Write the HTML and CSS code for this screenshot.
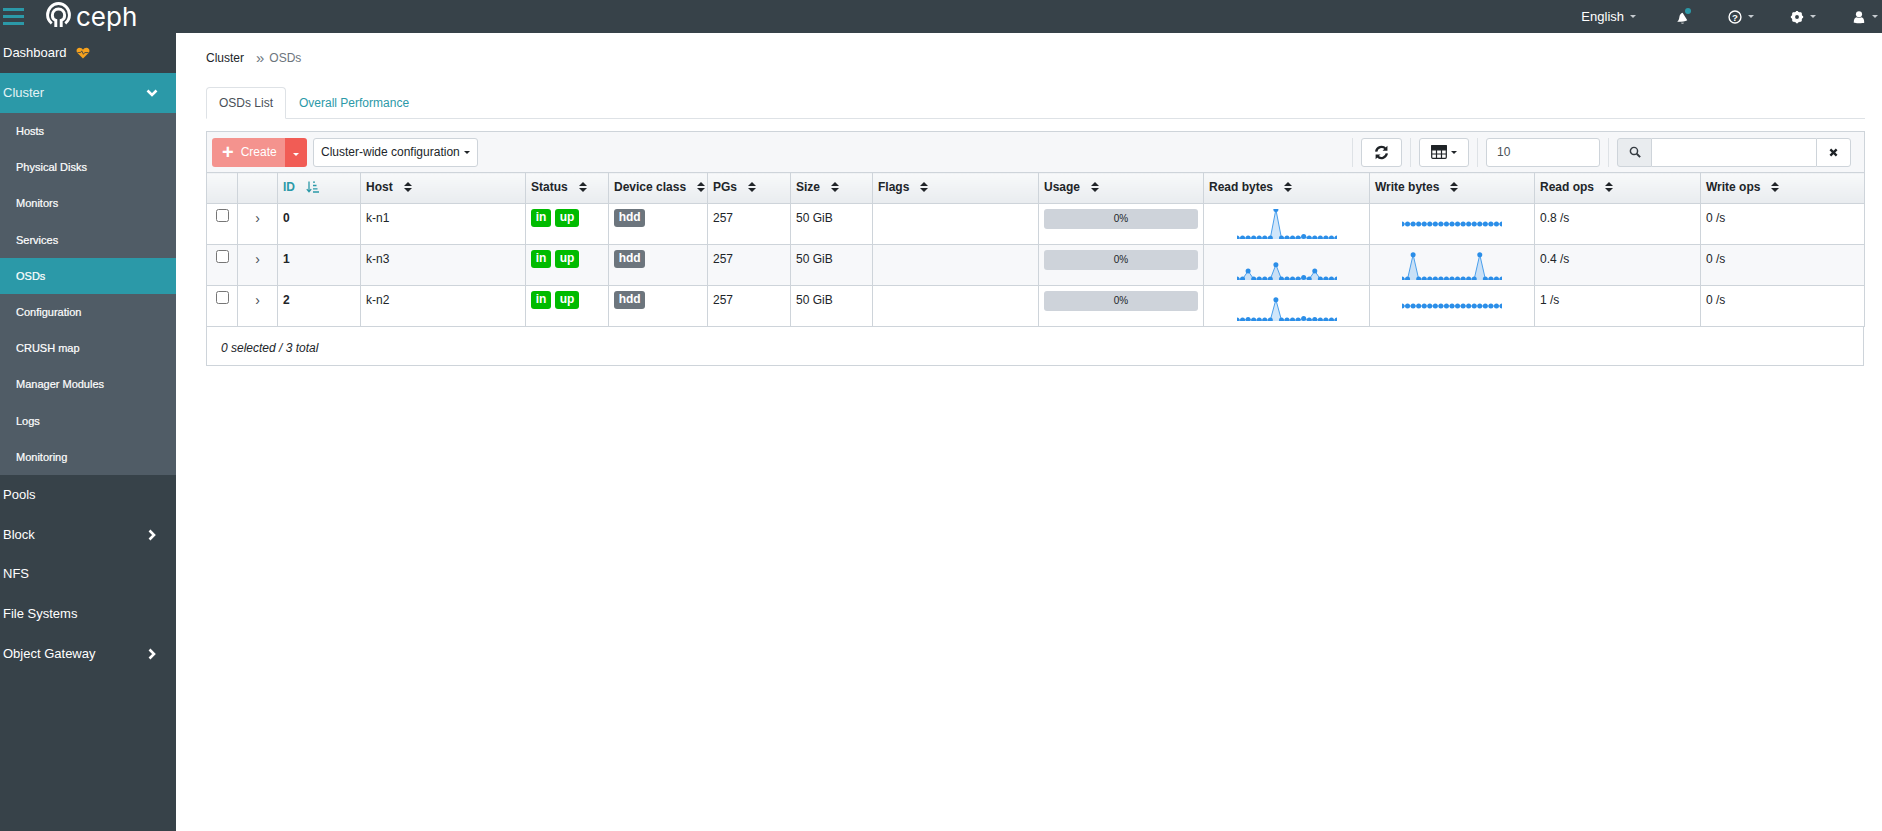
FILE: index.html
```html
<!DOCTYPE html>
<html lang="en">
<head>
    <meta charset="UTF-8">
    <meta name="viewport" content="width=device-width, initial-scale=1.0">
    <title>Ceph - OSDs</title>
    <link rel="stylesheet" href="styles.css">
</head>
<body>
    <header class="topbar">
        <div class="hamburger"><span></span><span></span><span></span></div>
        <div class="brand">
            <svg class="brand-mark" viewBox="0 0 24 24" fill="none" stroke="#fff" stroke-width="2.800">
                <path d="M5.500 20.500C3 18.500 1.500 15.500 1.500 12.500 1.500 6.500 6.100 1.500 12 1.500s10.500 5 10.500 11c0 3-1.500 6-4 8"/>
                <path d="M9.400 24v-6.400c-2-.7-3.300-2.600-3.300-5 0-3.300 2.600-5.900 5.900-5.900s5.900 2.600 5.900 5.900c0 2.400-1.300 4.300-3.300 5V24"/>
            </svg>
            <span class="brand-name">ceph</span>
        </div>
        <nav class="topnav">
            <a class="topnav-lang">English<i class="caret"></i></a>
            <a class="topnav-bell">
                <svg class="nav-icon" viewBox="0 0 16 16" fill="#fff"><path d="M2.500 13.500c1.800-1.600 2.300-3.400 2.500-5.500.3-2.700 1.700-4.700 3.700-5l5.300 8.800c-2.500 1.300-6.500 1.800-11.500 1.700zM6.800 14.500h3.400c-.4 1.300-2.700 1.300-3.400 0z"/></svg>
                <span class="bell-dot"></span>
            </a>
            <a class="topnav-icon">
                <svg class="nav-icon" viewBox="0 0 16 16"><circle cx="8" cy="8" r="6.800" fill="none" stroke="#fff" stroke-width="1.600"/><text x="8" y="12" text-anchor="middle" class="help-mark">?</text></svg>
                <i class="caret"></i>
            </a>
            <a class="topnav-icon">
                <svg class="nav-icon" viewBox="0 0 16 16"><circle cx="8" cy="8" r="4.600" fill="none" stroke="#fff" stroke-width="3.400"/><path d="M8 1v14M1 8h14M3 3l10 10M13 3L3 13" stroke="#fff" stroke-width="2.200"/><circle cx="8" cy="8" r="2.200" fill="#374249"/></svg>
                <i class="caret"></i>
            </a>
            <a class="topnav-icon topnav-user">
                <svg class="nav-icon" viewBox="0 0 16 16" fill="#fff"><circle cx="8" cy="4.800" r="3.500"/><path d="M2 14.500c0-4 1-6 3.500-6.300 1.500 1 3.500 1 5 0C13 8.500 14 10.500 14 14.500c-1 .7-11 .7-12 0z"/></svg>
                <i class="caret"></i>
            </a>
        </nav>
    </header>

    <div class="layout">
        <aside class="sidebar">
            <a class="side-item side-top">Dashboard
                <svg class="heart" viewBox="0 0 16 14"><path d="M8 13.500L1.500 7C-.5 4.800.5 1 4 1c1.800 0 3.200 1 4 2.200C8.800 2 10.200 1 12 1c3.500 0 4.500 3.800 2.500 6z" fill="#f6a21e"/><path d="M1.500 6.500h3.700l1.300-2 2 4 1.500-2h4.500" fill="none" stroke="#374249" stroke-width="1"/></svg>
            </a>
            <a class="side-item side-top side-open">Cluster
                <svg class="chevron" viewBox="0 0 12 12"><path d="M1.500 3.500L6 8l4.500-4.500" fill="none" stroke="#fff" stroke-width="2.600"/></svg>
            </a>
            <ul class="side-sub">
                <li>Hosts</li>
                <li>Physical Disks</li>
                <li>Monitors</li>
                <li>Services</li>
                <li class="active">OSDs</li>
                <li>Configuration</li>
                <li>CRUSH map</li>
                <li>Manager Modules</li>
                <li>Logs</li>
                <li>Monitoring</li>
            </ul>
            <a class="side-item">Pools</a>
            <a class="side-item">Block
                <svg class="chevron" viewBox="0 0 12 12"><path d="M3.500 1.500L8 6l-4.500 4.500" fill="none" stroke="#fff" stroke-width="2.600"/></svg>
            </a>
            <a class="side-item">NFS</a>
            <a class="side-item">File Systems</a>
            <a class="side-item">Object Gateway
                <svg class="chevron" viewBox="0 0 12 12"><path d="M3.500 1.500L8 6l-4.500 4.500" fill="none" stroke="#fff" stroke-width="2.600"/></svg>
            </a>
        </aside>

        <main class="content">
            <div class="breadcrumb"><span>Cluster</span><span class="crumb-sep">&raquo;</span><span class="crumb-current">OSDs</span></div>

            <ul class="tabs">
                <li class="tab active">OSDs List</li>
                <li class="tab">Overall Performance</li>
            </ul>

            <div class="toolbar">
                <div class="btn-group">
                    <button class="btn-create"><b class="plus">+</b>Create</button>
                    <button class="btn-create-toggle"><i class="caret"></i></button>
                </div>
                <button class="btn">Cluster-wide configuration<i class="caret dark"></i></button>
                <div class="toolbar-right">
                    <div class="tool-slot">
                        <button class="btn btn-icon">
                            <svg class="refresh-icon" viewBox="0 0 16 16" fill="none" stroke="#1f2327" stroke-width="2.500"><path d="M2.300 7a5.800 5.800 0 0 1 10-3"/><path d="M13.700 9a5.800 5.800 0 0 1-10 3"/><path d="M14.300 .8v5.200H9.100z" fill="#1f2327" stroke="none"/><path d="M1.700 15.200V10h5.200z" fill="#1f2327" stroke="none"/></svg>
                        </button>
                    </div>
                    <div class="tool-slot">
                        <button class="btn btn-columns">
                            <svg class="tool-icon" viewBox="0 0 16 14" fill="none" stroke="#1f2327" stroke-width="1.200"><rect x=".7" y=".7" width="14.600" height="12.600" rx="1"/><path d="M.7 4.800h14.600M.7 9h14.600M5.500 4.800v8.500M10.500 4.800v8.500"/><rect x=".7" y=".7" width="14.600" height="3.600" fill="#1f2327"/></svg>
                            <i class="caret dark"></i>
                        </button>
                    </div>
                    <div class="tool-slot">
                        <input class="page-size" type="text" value="10">
                    </div>
                    <div class="tool-slot search">
                        <span class="search-addon">
                            <svg class="search-icon" viewBox="0 0 14 14" fill="none" stroke="#343a40" stroke-width="1.700"><circle cx="5.800" cy="5.800" r="4.200"/><path d="M9 9l4 4" stroke-width="2.200"/></svg>
                        </span>
                        <input class="search-input" type="text">
                        <span class="search-clear">
                            <svg class="clear-icon" viewBox="0 0 10 10" stroke="#1f2327" stroke-width="2.600"><path d="M1.500 1.500l7 7M8.500 1.500l-7 7"/></svg>
                        </span>
                    </div>
                </div>
            </div>

            <table class="datatable">
                <colgroup>
                    <col class="w31"><col class="w40"><col class="w83"><col class="w165"><col class="w83"><col class="w99"><col class="w83"><col class="w82"><col class="w166"><col class="w165"><col class="w166"><col class="w165"><col class="w166"><col class="w164">
                </colgroup>
                <thead>
                    <tr>
                        <th></th>
                        <th></th>
                        <th class="sorted">ID
                            <svg class="sort-id" viewBox="0 0 13 12" fill="none" stroke="#2b99a8" stroke-width="1.300"><path d="M3 .5v10M.8 8.200L3 10.800l2.200-2.600"/><path d="M7 1.200h2M7 4.500h3.500M7 7.800h4.500M7 11h6"/></svg>
                        </th>
                        <th>Host<i class="sort"></i></th>
                        <th>Status<i class="sort"></i></th>
                        <th>Device class<i class="sort"></i></th>
                        <th>PGs<i class="sort"></i></th>
                        <th>Size<i class="sort"></i></th>
                        <th>Flags<i class="sort"></i></th>
                        <th>Usage<i class="sort"></i></th>
                        <th>Read bytes<i class="sort"></i></th>
                        <th>Write bytes<i class="sort"></i></th>
                        <th>Read ops<i class="sort"></i></th>
                        <th>Write ops<i class="sort"></i></th>
                    </tr>
                </thead>
                <tbody>
                    <tr>
                        <td class="cell-check"><input type="checkbox"></td>
                        <td class="cell-expand">&rsaquo;</td>
                        <td class="cell-id">0</td>
                        <td>k-n1</td>
                        <td><span class="badge ok">in</span><span class="badge ok">up</span></td>
                        <td><span class="badge gray">hdd</span></td>
                        <td>257</td>
                        <td>50 GiB</td>
                        <td></td>
                        <td><div class="usage">0%</div></td>
                        <td class="cell-spark"><svg class="spark" data-peaks="7:0.5,12:27.5"></svg></td>
                        <td class="cell-spark"><svg class="spark" data-flat="15"></svg></td>
                        <td>0.8 /s</td>
                        <td>0 /s</td>
                    </tr>
                    <tr>
                        <td class="cell-check"><input type="checkbox"></td>
                        <td class="cell-expand">&rsaquo;</td>
                        <td class="cell-id">1</td>
                        <td>k-n3</td>
                        <td><span class="badge ok">in</span><span class="badge ok">up</span></td>
                        <td><span class="badge gray">hdd</span></td>
                        <td>257</td>
                        <td>50 GiB</td>
                        <td></td>
                        <td><div class="usage">0%</div></td>
                        <td class="cell-spark"><svg class="spark" data-peaks="2:21,7:14.7,12:27.5,14:21"></svg></td>
                        <td class="cell-spark"><svg class="spark" data-peaks="2:4.7,14:4.7"></svg></td>
                        <td>0.4 /s</td>
                        <td>0 /s</td>
                    </tr>
                    <tr>
                        <td class="cell-check"><input type="checkbox"></td>
                        <td class="cell-expand">&rsaquo;</td>
                        <td class="cell-id">2</td>
                        <td>k-n2</td>
                        <td><span class="badge ok">in</span><span class="badge ok">up</span></td>
                        <td><span class="badge gray">hdd</span></td>
                        <td>257</td>
                        <td>50 GiB</td>
                        <td></td>
                        <td><div class="usage">0%</div></td>
                        <td class="cell-spark"><svg class="spark" data-peaks="2:28.5,7:8.7,12:27.5,14:28.5"></svg></td>
                        <td class="cell-spark"><svg class="spark" data-flat="15"></svg></td>
                        <td>1 /s</td>
                        <td>0 /s</td>
                    </tr>
                </tbody>
            </table>
            <div class="table-footer">0 selected / 3 total</div>
        </main>
    </div>

    <script>
        // draw the small read/write charts from the data attributes
        const NS = 'http://www.w3.org/2000/svg';
        const POINTS = 19;
        const STEP = 100 / (POINTS - 1);
        const BASE = 29;

        document.querySelectorAll('.spark').forEach(svg => {
            const flat = svg.dataset.flat;
            const ys = new Array(POINTS).fill(flat ? Number(flat) : BASE);
            (svg.dataset.peaks || '').split(',').filter(Boolean).forEach(pair => {
                const [index, y] = pair.split(':');
                ys[Number(index)] = Number(y);
            });

            const coords = ys.map((y, i) => `${(i * STEP).toFixed(2)},${y}`);
            svg.setAttribute('viewBox', '0 0 100 30');

            // a flat line has no area under it in the reference charts
            if (!flat) {
                const area = document.createElementNS(NS, 'polygon');
                area.setAttribute('points', `0,30 ${coords.join(' ')} 100,30`);
                area.setAttribute('class', 'spark-area');
                svg.appendChild(area);
            }

            const line = document.createElementNS(NS, 'polyline');
            line.setAttribute('points', coords.join(' '));
            line.setAttribute('class', 'spark-line');
            svg.appendChild(line);

            ys.forEach((y, i) => {
                const dot = document.createElementNS(NS, 'circle');
                dot.setAttribute('cx', (i * STEP).toFixed(2));
                dot.setAttribute('cy', y);
                dot.setAttribute('r', 2.5);
                dot.setAttribute('class', 'spark-dot');
                svg.appendChild(dot);
            });
        });
    </script>
</body>
</html>
```

FILE: styles.css
```css
* {
    box-sizing: border-box;
}

html, body {
    height: 100%;
}

body {
    margin: 0;
    overflow: hidden;
    font-family: "Liberation Sans", Arial, sans-serif;
    font-size: 12px;
    line-height: 18px;
    color: #212529;
    background-color: #fff;
}

/* top bar */
.topbar {
    display: flex;
    align-items: center;
    height: 33px;
    background-color: #374249;
    color: #fff;
}

.hamburger {
    display: flex;
    flex-direction: column;
    gap: 3.4px;
    width: 21px;
    margin-left: 3px;
}

.hamburger span {
    height: 3.3px;
    background-color: #2b99a8;
}

.brand {
    display: flex;
    align-items: center;
    margin-left: 22px;
}

.brand-mark {
    width: 25px;
    height: 25px;
    margin-top: -5px;
}

.brand-name {
    margin-left: 5px;
    font-family: Inter, sans-serif;
    font-size: 26px;
    line-height: 28px;
    font-weight: 400;
}

.topnav {
    display: flex;
    align-items: center;
    margin-left: auto;
}

.topnav a {
    display: flex;
    align-items: center;
}

.topnav-lang {
    font-size: 13px;
    margin-right: 39px;
}

.topnav-bell {
    position: relative;
    margin-right: 39px;
}

.bell-dot {
    position: absolute;
    top: -2px;
    right: -2px;
    width: 6px;
    height: 6px;
    border-radius: 50%;
    background-color: #2b99a8;
}

.topnav-icon {
    margin-right: 36px;
}

.topnav-user {
    margin-right: 4px;
}

.nav-icon {
    width: 14px;
    height: 14px;
}

.help-mark {
    font-size: 11px;
    font-weight: 700;
    fill: #fff;
}

.caret {
    display: inline-block;
    width: 0;
    height: 0;
    margin-left: 6px;
    border-left: 3.500px solid transparent;
    border-right: 3.500px solid transparent;
    border-top: 3.500px solid #c6cbd0;
}

.caret.dark {
    margin-left: 4px;
    border-top-color: #212529;
}

/* layout */
.layout {
    display: flex;
    height: calc(100vh - 33px);
}

.sidebar {
    flex: none;
    width: 176px;
    background-color: #374249;
    color: #fff;
}

.side-item {
    display: flex;
    align-items: center;
    height: 39.800px;
    padding-left: 3px;
    font-size: 13px;
}

.side-top {
    height: 40px;
}

.side-open {
    background-color: #2b99a8;
    color: #e4f3f5;
}

.heart {
    width: 14px;
    height: 12px;
    margin-left: 9px;
    margin-top: -1px;
}

.chevron {
    width: 12px;
    height: 12px;
    margin-left: auto;
    margin-right: 18px;
}

.side-sub {
    list-style: none;
    margin: 0;
    padding: 0;
    background-color: #505c66;
}

.side-sub li {
    display: flex;
    align-items: center;
    height: 36.200px;
    padding-left: 16px;
    font-size: 11px;
    -webkit-text-stroke: 0.2px #fff;
}

.side-sub li.active {
    background-color: #2b99a8;
}

/* main area */
.content {
    flex: 1;
    padding: 16px 18px 0 30px;
}

.breadcrumb {
    display: flex;
    margin-bottom: 20px;
}

.crumb-sep {
    margin-left: 12px;
    margin-right: 5px;
    font-size: 15px;
    color: #6c757d;
}

.crumb-current {
    color: #6c757d;
}

.tabs {
    display: flex;
    list-style: none;
    margin: 0 0 12px;
    padding: 0;
    height: 32px;
    border-bottom: 1px solid #dee2e6;
}

.tab {
    height: 32px;
    padding: 6px 12px;
    border: 1px solid transparent;
    color: #2b99a8;
}

.tab.active {
    color: #495057;
    background-color: #fff;
    border-color: #dee2e6 #dee2e6 #fff;
    border-radius: 4px 4px 0 0;
}

/* toolbar above the table */
.toolbar {
    display: flex;
    align-items: center;
    height: 41px;
    padding: 0 5px;
    background-color: #f6f7f9;
    border: 1px solid #ced4da;
    border-bottom: none;
}

.btn-group {
    display: flex;
    margin-right: 6px;
}

button {
    font-family: inherit;
    font-size: 12px;
    cursor: pointer;
}

.btn-create,
.btn-create-toggle {
    height: 29px;
    border: none;
    color: #fff;
}

.btn-create {
    display: flex;
    align-items: center;
    width: 73px;
    padding: 0 0 0 10px;
    background-color: #f4938e;
    border-radius: 3px 0 0 3px;
}

.plus {
    font-size: 20px;
    margin-right: 7px;
}

.btn-create-toggle {
    width: 22px;
    padding: 0;
    background-color: #f15c55;
    border-radius: 0 3px 3px 0;
}

.btn-create-toggle .caret {
    margin-left: 0;
    border-top-color: #fff;
}

.btn {
    display: flex;
    align-items: center;
    height: 29px;
    padding: 0 7px;
    background-color: #fff;
    border: 1px solid #ced4da;
    border-radius: 3px;
    color: #212529;
}

.toolbar-right {
    display: flex;
    align-items: center;
    margin-left: auto;
}

.tool-slot {
    display: flex;
    align-items: center;
    height: 29px;
    padding: 0 8px;
    border-left: 1px solid #dee2e6;
}

.btn-icon {
    justify-content: center;
    width: 41px;
}

.btn-columns {
    justify-content: center;
    width: 50px;
}

.tool-icon {
    width: 16px;
    height: 14px;
}

.refresh-icon {
    width: 15px;
    height: 15px;
}

.page-size {
    width: 114px;
    height: 29px;
    padding: 0 10px;
    font-family: inherit;
    font-size: 12px;
    color: #495057;
    background-color: #fff;
    border: 1px solid #ced4da;
    border-radius: 3px;
}

.search {
    padding-right: 0;
    margin-right: 8px;
}

.search-addon,
.search-clear {
    display: flex;
    align-items: center;
    justify-content: center;
    height: 29px;
    border: 1px solid #ced4da;
}

.search-addon {
    width: 35px;
    background-color: #e9ecef;
    border-radius: 3px 0 0 3px;
}

.search-icon {
    width: 12px;
    height: 12px;
}

.search-input {
    width: 164px;
    height: 29px;
    background-color: #fff;
    border: 1px solid #ced4da;
    border-left: none;
    border-right: none;
}

.search-clear {
    width: 35px;
    background-color: #fff;
    border-radius: 0 3px 3px 0;
}

.clear-icon {
    width: 9px;
    height: 9px;
}

/* table */
.datatable {
    width: 1658px;
    table-layout: fixed;
    border-collapse: collapse;
}

.w31 { width: 31px; }
.w40 { width: 40px; }
.w82 { width: 82px; }
.w83 { width: 83px; }
.w99 { width: 99px; }
.w164 { width: 164px; }
.w165 { width: 165px; }
.w166 { width: 166px; }

.datatable th,
.datatable td {
    border: 1px solid #ced4da;
    padding: 5px;
    text-align: left;
    vertical-align: top;
}

.datatable th {
    height: 31px;
    font-weight: 700;
    background: linear-gradient(#f8f9fa, #e9ecef);
    white-space: nowrap;
}

.datatable td {
    height: 41px;
}

.datatable tbody tr:nth-child(even) {
    background-color: #f7f8fa;
}

th.sorted {
    color: #2b99a8;
}

.sort-id {
    width: 13px;
    height: 12px;
    margin-left: 8px;
    vertical-align: -2px;
}

.sort {
    display: inline-block;
    width: 8px;
    height: 10px;
    margin-left: 11px;
    vertical-align: -1px;
    position: relative;
}

.sort::before,
.sort::after {
    content: "";
    position: absolute;
    left: 0;
    border-left: 4px solid transparent;
    border-right: 4px solid transparent;
}

.sort::before {
    top: 0;
    border-bottom: 4px solid #212529;
}

.sort::after {
    bottom: 0;
    border-top: 4px solid #212529;
}

.cell-check input {
    display: block;
    width: 13px;
    height: 13px;
    margin: 0 0 0 4px;
}

.datatable td.cell-expand {
    text-align: center;
    font-size: 14px;
    color: #495057;
}

.cell-id {
    font-weight: 700;
}

.badge {
    display: inline-block;
    height: 18px;
    padding: 0 4.700px;
    margin-right: 4px;
    font-weight: 700;
    line-height: 17px;
    color: #fff;
    border-radius: 3px;
    vertical-align: top;
}

.badge.ok {
    background-color: #00bb00;
}

.badge.gray {
    background-color: #6c757d;
}

.usage {
    height: 20px;
    font-size: 10px;
    line-height: 20px;
    text-align: center;
    background-color: #ced3da;
    border-radius: 3px;
}

.datatable td.cell-spark {
    padding: 5px 0 0;
    text-align: center;
}

.spark {
    display: inline-block;
    width: 100px;
    height: 30px;
    overflow: hidden;
    vertical-align: top;
}

.spark-area {
    fill: rgba(43, 142, 232, 0.22);
}

.spark-line {
    fill: none;
    stroke: #4a9fec;
    stroke-width: 1;
}

.spark-dot {
    fill: #2b8ee8;
}

.table-footer {
    width: 1658px;
    height: 39px;
    padding: 12px 14px;
    font-style: italic;
    border: 1px solid #ced4da;
    border-top: none;
}
```
